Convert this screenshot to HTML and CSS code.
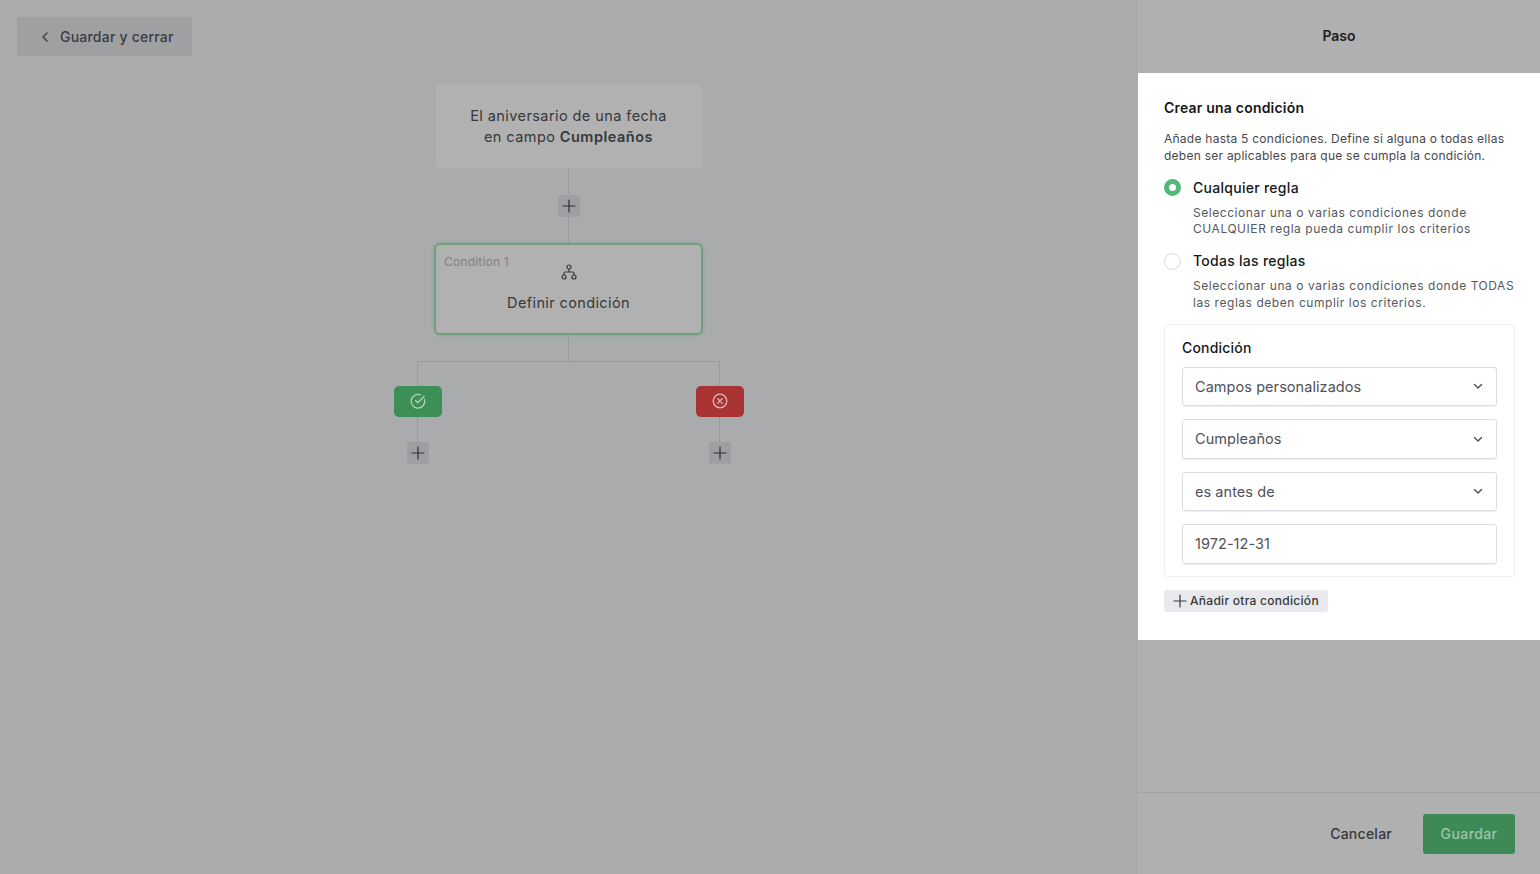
FILE: index.html
```html
<!DOCTYPE html>
<html lang="en">

<head>
  <meta charset="UTF-8">
  <title>Paso - Condición</title>
  <link rel="stylesheet" href="styles.css">
</head>

<body>
  <main class="canvas">
    <div class="topbar">
      <button class="back">
        <svg width="16" height="16" viewBox="0 0 16 16" fill="none" stroke="currentColor" stroke-width="1.4" stroke-linecap="round" stroke-linejoin="round"><path d="M10 4l-4 4 4 4"/></svg>
        Guardar y cerrar
      </button>
    </div>

    <div class="tree">
      <div class="trigger">El aniversario de una fecha<br>en campo <b>Cumpleaños</b></div>
      <div class="line h27"></div>
      <div class="plus">
        <svg width="14" height="14" viewBox="0 0 14 14" stroke="currentColor" stroke-width="1.2" stroke-linecap="round"><path d="M7 1v12M1 7h12"/></svg>
      </div>
      <div class="line h26"></div>
      <div class="condition">
        <span class="condition-tag">Condition 1</span>
        <svg class="condition-icon" width="16" height="16" viewBox="0 0 16 16" fill="none" stroke="currentColor" stroke-width="1.2"><circle cx="8" cy="3" r="2"/><circle cx="3" cy="13" r="2"/><circle cx="13" cy="13" r="2"/><path d="M3 11V9.500Q3 8 4.500 8h7Q13 8 13 9.500V11M8 5v3"/></svg>
        <span class="condition-text">Definir condición</span>
      </div>
      <div class="line h26"></div>
      <div class="fork"></div>
      <div class="branches">
        <div class="branch">
          <div class="pill pill-yes">
            <svg width="18" height="18" viewBox="0 0 18 18" fill="none" stroke="currentColor" stroke-width="1.3" stroke-linecap="round" stroke-linejoin="round"><path d="M15.500 7.500A6.800 6.800 0 1 1 11.500 3"/><path d="M6.500 8.500l2.200 2.200L15 4.500"/></svg>
          </div>
          <div class="line h25"></div>
          <div class="plus">
            <svg width="14" height="14" viewBox="0 0 14 14" stroke="currentColor" stroke-width="1.2" stroke-linecap="round"><path d="M7 1v12M1 7h12"/></svg>
          </div>
        </div>
        <div class="branch">
          <div class="pill pill-no">
            <svg width="18" height="18" viewBox="0 0 18 18" fill="none" stroke="currentColor" stroke-width="1.3" stroke-linecap="round"><circle cx="9" cy="9" r="6.800"/><path d="M6.800 6.800l4.400 4.400M11.200 6.800l-4.400 4.400"/></svg>
          </div>
          <div class="line h25"></div>
          <div class="plus">
            <svg width="14" height="14" viewBox="0 0 14 14" stroke="currentColor" stroke-width="1.2" stroke-linecap="round"><path d="M7 1v12M1 7h12"/></svg>
          </div>
        </div>
      </div>
    </div>
  </main>

  <aside class="panel">
    <header class="panel-head">Paso</header>

    <section class="panel-body">
      <h2 class="panel-title">Crear una condición</h2>
      <p class="panel-intro">Añade hasta 5 condiciones. Define si alguna o todas ellas<br>deben ser aplicables para que se cumpla la condición.</p>

      <div class="option">
        <span class="radio radio-on"></span>
        <div>
          <div class="option-label">Cualquier regla</div>
          <p class="option-desc">Seleccionar una o varias condiciones donde<br>CUALQUIER regla pueda cumplir los criterios</p>
        </div>
      </div>
      <div class="option">
        <span class="radio"></span>
        <div>
          <div class="option-label">Todas las reglas</div>
          <p class="option-desc">Seleccionar una o varias condiciones donde TODAS<br>las reglas deben cumplir los criterios.</p>
        </div>
      </div>

      <div class="rule">
        <div class="rule-title">Condición</div>
        <div class="field">Campos personalizados
          <svg width="12" height="12" viewBox="0 0 12 12" fill="none" stroke="currentColor" stroke-width="1.3" stroke-linecap="round" stroke-linejoin="round"><path d="M2.500 4.500L6 8l3.500-3.500"/></svg>
        </div>
        <div class="field">Cumpleaños
          <svg width="12" height="12" viewBox="0 0 12 12" fill="none" stroke="currentColor" stroke-width="1.3" stroke-linecap="round" stroke-linejoin="round"><path d="M2.500 4.500L6 8l3.500-3.500"/></svg>
        </div>
        <div class="field">es antes de
          <svg width="12" height="12" viewBox="0 0 12 12" fill="none" stroke="currentColor" stroke-width="1.3" stroke-linecap="round" stroke-linejoin="round"><path d="M2.500 4.500L6 8l3.500-3.500"/></svg>
        </div>
        <div class="field">1972-12-31</div>
      </div>

      <button class="add">
        <svg width="14" height="14" viewBox="0 0 14 14" stroke="currentColor" stroke-width="1.2" stroke-linecap="round"><path d="M7 1v12M1 7h12"/></svg>
        Añadir otra condición
      </button>
    </section>

    <div class="panel-space"></div>

    <footer class="panel-foot">
      <button class="cancel">Cancelar</button>
      <button class="save">Guardar</button>
    </footer>
  </aside>
</body>

</html>
```

FILE: styles.css
```css
* {
  margin: 0;
  padding: 0;
  box-sizing: border-box;
  font-family: Inter, 'Liberation Sans', sans-serif;
}

body {
  display: flex;
  width: 1540px;
  height: 874px;
  overflow: hidden;
  background-color: #a9abad;
}

button {
  border: none;
  font-size: 14px;
  cursor: pointer;
}

.canvas {
  width: 1138px;
  height: 874px;
}

.topbar {
  padding: 17px 0 0 17px;
  height: 84px;
}

.back {
  display: flex;
  align-items: center;
  gap: 7px;
  width: 175px;
  height: 39px;
  padding-left: 20px;
  background-color: #9fa0a2;
  color: #3a3c40;
  font-weight: 500;
  letter-spacing: 0.22px;
}

.tree {
  display: flex;
  flex-direction: column;
  align-items: center;
  padding-right: 1px;
}

.trigger {
  width: 266px;
  height: 84px;
  padding-top: 21px;
  border-radius: 4px;
  background-color: #b1b1b1;
  color: #36383b;
  font-size: 14.500px;
  line-height: 21px;
  text-align: center;
  letter-spacing: 0.42px;
}

.trigger b {
  font-weight: 600;
  letter-spacing: 0.5px;
}

.line {
  width: 1px;
  background-color: #98999b;
}

.h25 { height: 25px; }
.h26 { height: 26px; }
.h27 { height: 27px; }

.plus {
  display: flex;
  align-items: center;
  justify-content: center;
  width: 22px;
  height: 22px;
  border-radius: 3px;
  background-color: #9d9fa2;
  color: #2c2e31;
}

.condition {
  position: relative;
  display: flex;
  flex-direction: column;
  align-items: center;
  width: 269px;
  height: 92px;
  padding-top: 19px;
  border: 2px solid #6f9f7f;
  border-radius: 6px;
  background-color: #b1b1b1;
  box-shadow: 0 0 3px #7ba888;
  color: #36383b;
}

.condition-tag {
  position: absolute;
  top: 9px;
  left: 8px;
  font-size: 12px;
  color: #808184;
  letter-spacing: 0.2px;
}

.condition-text {
  margin-top: 14px;
  font-size: 14.500px;
  letter-spacing: 0.38px;
}

.fork {
  width: 303px;
  height: 25px;
  border: 1px solid #98999b;
  border-bottom: none;
}

.branches {
  display: flex;
  gap: 254px;
}

.branch {
  display: flex;
  flex-direction: column;
  align-items: center;
}

.pill {
  display: flex;
  align-items: center;
  justify-content: center;
  width: 48px;
  height: 31px;
  padding-bottom: 1px;
  border-radius: 5px;
}

.pill-yes {
  background-color: #3c8f57;
  color: #b5d3bf;
}

.pill-no {
  background-color: #aa3434;
  color: #e0b9b9;
}

.panel {
  display: flex;
  flex-direction: column;
  width: 402px;
  height: 874px;
  background-color: #b0b0b0;
}

.panel-head {
  height: 73px;
  padding-top: 27px;
  text-align: center;
  font-size: 14px;
  font-weight: 600;
  color: #1c1d1f;
}

.panel-body {
  height: 567px;
  padding: 26px 25px 0 26px;
  background-color: #fff;
}

.panel-title {
  font-size: 14px;
  font-weight: 600;
  line-height: 18px;
  color: #17181a;
  letter-spacing: 0.2px;
}

.panel-intro {
  margin-top: 14px;
  font-size: 12px;
  line-height: 16.500px;
  color: #45474b;
  letter-spacing: 0.25px;
}

.option {
  display: flex;
  gap: 12px;
  margin-top: 14.500px;
}

.option + .option {
  margin-top: 14.500px;
}

.radio {
  flex: none;
  width: 17px;
  height: 17px;
  margin-top: 0.500px;
  border: 1px solid #d8d9dc;
  border-radius: 50%;
  background-color: #fff;
}

.radio-on {
  border: 5px solid #53b878;
}

.option-label {
  font-size: 14px;
  font-weight: 500;
  line-height: 18px;
  color: #17181a;
  letter-spacing: 0.28px;
}

.option-desc {
  margin-top: 8px;
  font-size: 12px;
  line-height: 16.500px;
  color: #55575b;
  letter-spacing: 0.55px;
}

.rule {
  width: 351px;
  height: 253.500px;
  margin-top: 12.500px;
  padding: 14px 17px 0;
  border: 1px solid #f0f0f2;
  border-radius: 3px;
}

.rule-title {
  font-size: 14px;
  font-weight: 500;
  line-height: 18px;
  color: #17181a;
  letter-spacing: 0.2px;
}

.field {
  display: flex;
  align-items: center;
  justify-content: space-between;
  height: 39.500px;
  margin-top: 13px;
  padding: 0 12.500px 0 12px;
  border: 1px solid #dcdde0;
  border-radius: 3px;
  box-shadow: 0 1px 1px #eeeef0;
  font-size: 14.500px;
  color: #505257;
  letter-spacing: 0.06px;
}

.rule-title + .field {
  margin-top: 10px;
}

.field svg {
  color: #45474b;
}

.add {
  display: flex;
  align-items: center;
  gap: 3px;
  height: 22.500px;
  margin-top: 12.500px;
  padding: 0 9px;
  border-radius: 3px;
  background-color: #e8e9ec;
  color: #36383b;
  font-size: 12px;
  font-weight: 500;
  letter-spacing: 0.28px;
}

.panel-space {
  flex: 1;
  border-bottom: 1px solid #a2a3a4;
}

.panel-foot {
  display: flex;
  align-items: center;
  justify-content: flex-end;
  gap: 31px;
  height: 81px;
  padding: 0 25px 0 0;
}

.cancel {
  background: none;
  color: #36383b;
  font-weight: 500;
  letter-spacing: 0.25px;
}

.save {
  width: 92px;
  height: 40px;
  border-radius: 3px;
  background-color: #3e8a56;
  color: #9dc4a9;
  font-weight: 500;
  letter-spacing: 0.4px;
}
```
